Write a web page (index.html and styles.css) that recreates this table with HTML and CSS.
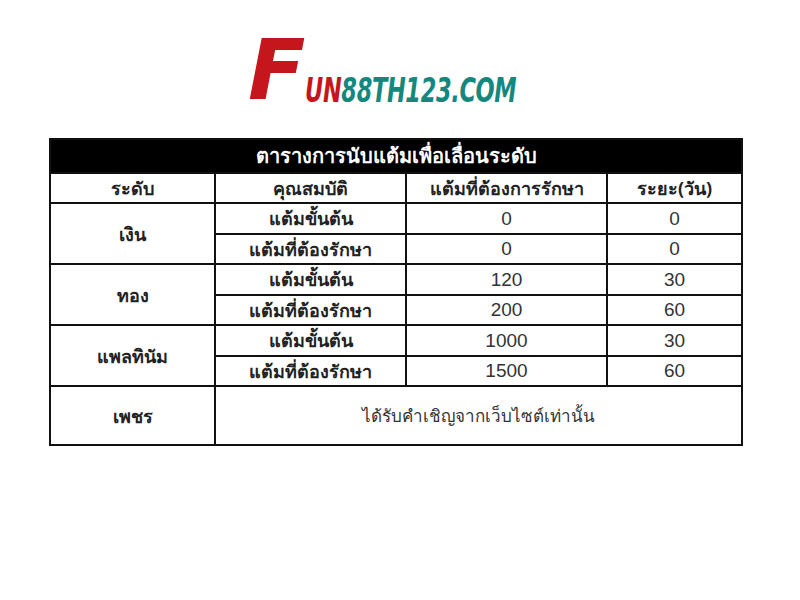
FILE: index.html
```html
<!DOCTYPE html>
<html lang="th">
<head>
<meta charset="utf-8">
<title>Fun88</title>
<link rel="stylesheet" href="styles.css">
</head>
<body>
<div class="logo">
  <span class="logo-f">F</span><span class="logo-word"><span class="logo-red">UN</span><span class="logo-teal">88TH123.COM</span></span>
</div>
<table class="rank">
  <colgroup>
    <col class="c1"><col class="c2"><col class="c3"><col class="c4">
  </colgroup>
  <tr class="title-row"><th colspan="4">ตารางการนับแต้มเพื่อเลื่อนระดับ</th></tr>
  <tr class="head-row"><th>ระดับ</th><th>คุณสมบัติ</th><th>แต้มที่ต้องการรักษา</th><th>ระยะ(วัน)</th></tr>
  <tr class="r"><td class="lvl" rowspan="2">เงิน</td><td class="prop">แต้มขั้นต้น</td><td class="num">0</td><td class="num">0</td></tr>
  <tr class="r"><td class="prop">แต้มที่ต้องรักษา</td><td class="num">0</td><td class="num">0</td></tr>
  <tr class="r"><td class="lvl" rowspan="2">ทอง</td><td class="prop">แต้มขั้นต้น</td><td class="num">120</td><td class="num">30</td></tr>
  <tr class="r"><td class="prop">แต้มที่ต้องรักษา</td><td class="num">200</td><td class="num">60</td></tr>
  <tr class="r"><td class="lvl" rowspan="2">แพลทินัม</td><td class="prop">แต้มขั้นต้น</td><td class="num">1000</td><td class="num">30</td></tr>
  <tr class="r"><td class="prop">แต้มที่ต้องรักษา</td><td class="num">1500</td><td class="num">60</td></tr>
  <tr class="last"><td class="lvl">เพชร</td><td class="invite" colspan="3">ได้รับคำเชิญจากเว็บไซต์เท่านั้น</td></tr>
</table>
</body>
</html>
```
FILE: styles.css
```css
html, body {
  margin: 0;
  padding: 0;
  background: #fff;
}
body {
  font-family: Tahoma, "Noto Sans", "DejaVu Sans", sans-serif;
}
.logo {
  margin: 43px 0 0 248px;
  height: 61px;
  display: flex;
  align-items: flex-end;
  font-family: "DejaVu Sans", sans-serif;
  font-weight: bold;
  font-style: italic;
  line-height: 1;
  white-space: nowrap;
}
.logo-f {
  font-size: 84px;
  color: #c4161c;
  line-height: 0.78;
  margin-right: 0;
}
.logo-word {
  display: inline-block;
  font-size: 34px;
  line-height: 0.78;
  letter-spacing: -0.5px;
  transform: scaleX(0.66);
  transform-origin: left bottom;
}
.logo-red {
  color: #c4161c;
}
.logo-teal {
  color: #15877d;
}
.rank {
  margin: 34px 0 0 49px;
  width: 692px;
  border-collapse: collapse;
  table-layout: fixed;
  border: 2px solid #000;
}
.c1 { width: 165px; }
.c2 { width: 191px; }
.c3 { width: 201px; }
.c4 { width: 135px; }
.rank th, .rank td {
  border: 2px solid #111;
  padding: 0;
  text-align: center;
  vertical-align: middle;
  line-height: 1;
}
.title-row th {
  background: #000;
  color: #fff;
  height: 32px;
  font-size: 20px;
  font-weight: bold;
}
.head-row th {
  height: 28px;
  font-size: 18px;
  font-weight: bold;
  color: #222;
}
.r td {
  height: 28.5px;
}
.lvl, .prop {
  font-size: 18px;
  font-weight: bold;
  color: #222;
}
.num {
  font-family: "Liberation Sans", Arial, sans-serif;
  font-size: 19px;
  color: #333;
}
.last td {
  height: 57px;
}
.invite {
  font-size: 17px;
  color: #333;
}
```
